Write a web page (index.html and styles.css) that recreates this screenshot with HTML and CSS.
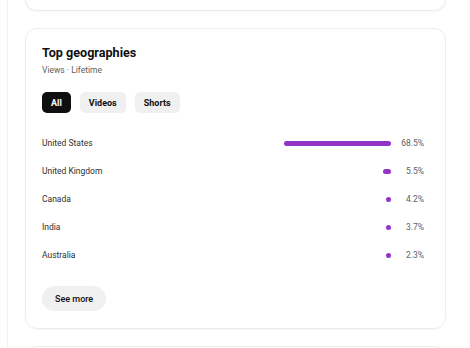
FILE: index.html
```html
<!DOCTYPE html>
<html lang="en">
<head>
    <meta charset="UTF-8">
    <meta name="viewport" content="width=device-width, initial-scale=1.0">
    <title>Top geographies</title>
    <link rel="stylesheet" href="styles.css">
</head>
<body>
    <div class="panel">
        <div class="card card-stub"></div>

        <div class="card">
            <h2 class="card-title">Top geographies</h2>
            <p class="card-sub">Views · Lifetime</p>

            <div class="chips">
                <button class="chip active">All</button>
                <button class="chip">Videos</button>
                <button class="chip">Shorts</button>
            </div>

            <div class="geo-list">
                <div class="geo-row">
                    <span class="geo-name">United States</span>
                    <span class="geo-bar" style="width: 107px"></span>
                    <span class="geo-pct">68.5%</span>
                </div>
                <div class="geo-row">
                    <span class="geo-name">United Kingdom</span>
                    <span class="geo-bar" style="width: 8px"></span>
                    <span class="geo-pct">5.5%</span>
                </div>
                <div class="geo-row">
                    <span class="geo-name">Canada</span>
                    <span class="geo-bar" style="width: 5px"></span>
                    <span class="geo-pct">4.2%</span>
                </div>
                <div class="geo-row">
                    <span class="geo-name">India</span>
                    <span class="geo-bar" style="width: 5px"></span>
                    <span class="geo-pct">3.7%</span>
                </div>
                <div class="geo-row">
                    <span class="geo-name">Australia</span>
                    <span class="geo-bar" style="width: 5px"></span>
                    <span class="geo-pct">2.3%</span>
                </div>
            </div>

            <button class="see-more">See more</button>
        </div>

        <div class="card card-next"></div>
    </div>
</body>
</html>
```

FILE: styles.css
```css
body {
    margin: 0;
    background-color: #fff;
    font-family: Roboto, "Liberation Sans", sans-serif;
    color: #0f0f0f;
}
.panel {
    margin-left: 7px;
    border-left: 1px solid #f1f1f1;
    padding: 0 24px 0 17px;
    height: 348px;
    overflow: hidden;
    display: flex;
    flex-direction: column;
    gap: 17px;
}
.card {
    flex-shrink: 0;
    border: 1px solid #ececec;
    border-radius: 12px;
    padding: 15px 21px 17px 16px;
    box-shadow: 0 1px 2px rgba(0, 0, 0, 0.03);
}
.card-stub {
    height: 10px;
    padding: 0;
    border-top: none;
    border-radius: 0 0 12px 12px;
}
.card-next {
    height: 40px;
    padding: 0;
}
.card-title {
    margin: 0;
    font-size: 12.6px;
    font-weight: 700;
    line-height: 18px;
}
.card-sub {
    margin: 2px 0 0;
    font-size: 8.5px;
    line-height: 12px;
    color: #606060;
}
.chips {
    display: flex;
    gap: 9px;
    margin-top: 16px;
}
.chip {
    height: 21px;
    padding: 0 9px;
    border: none;
    border-radius: 5px;
    background-color: #f0f0f0;
    color: #0f0f0f;
    font-family: inherit;
    font-size: 9px;
    font-weight: 700;
}
.chip.active {
    background-color: #0f0f0f;
    color: #fff;
}
.geo-list {
    margin-top: 16px;
}
.geo-row {
    display: flex;
    align-items: center;
    height: 28px;
    font-size: 8.5px;
}
.geo-name {
    flex: 1;
    color: #303030;
}
.geo-bar {
    height: 5px;
    border-radius: 3px;
    background-color: #9334c8;
}
.geo-pct {
    width: 33px;
    text-align: right;
    color: #606060;
}
.see-more {
    margin-top: 17px;
    height: 25px;
    padding: 0 13px;
    border: none;
    border-radius: 13px;
    background-color: #f0f0f0;
    color: #0f0f0f;
    font-family: inherit;
    font-size: 9px;
    font-weight: 500;
}
```
